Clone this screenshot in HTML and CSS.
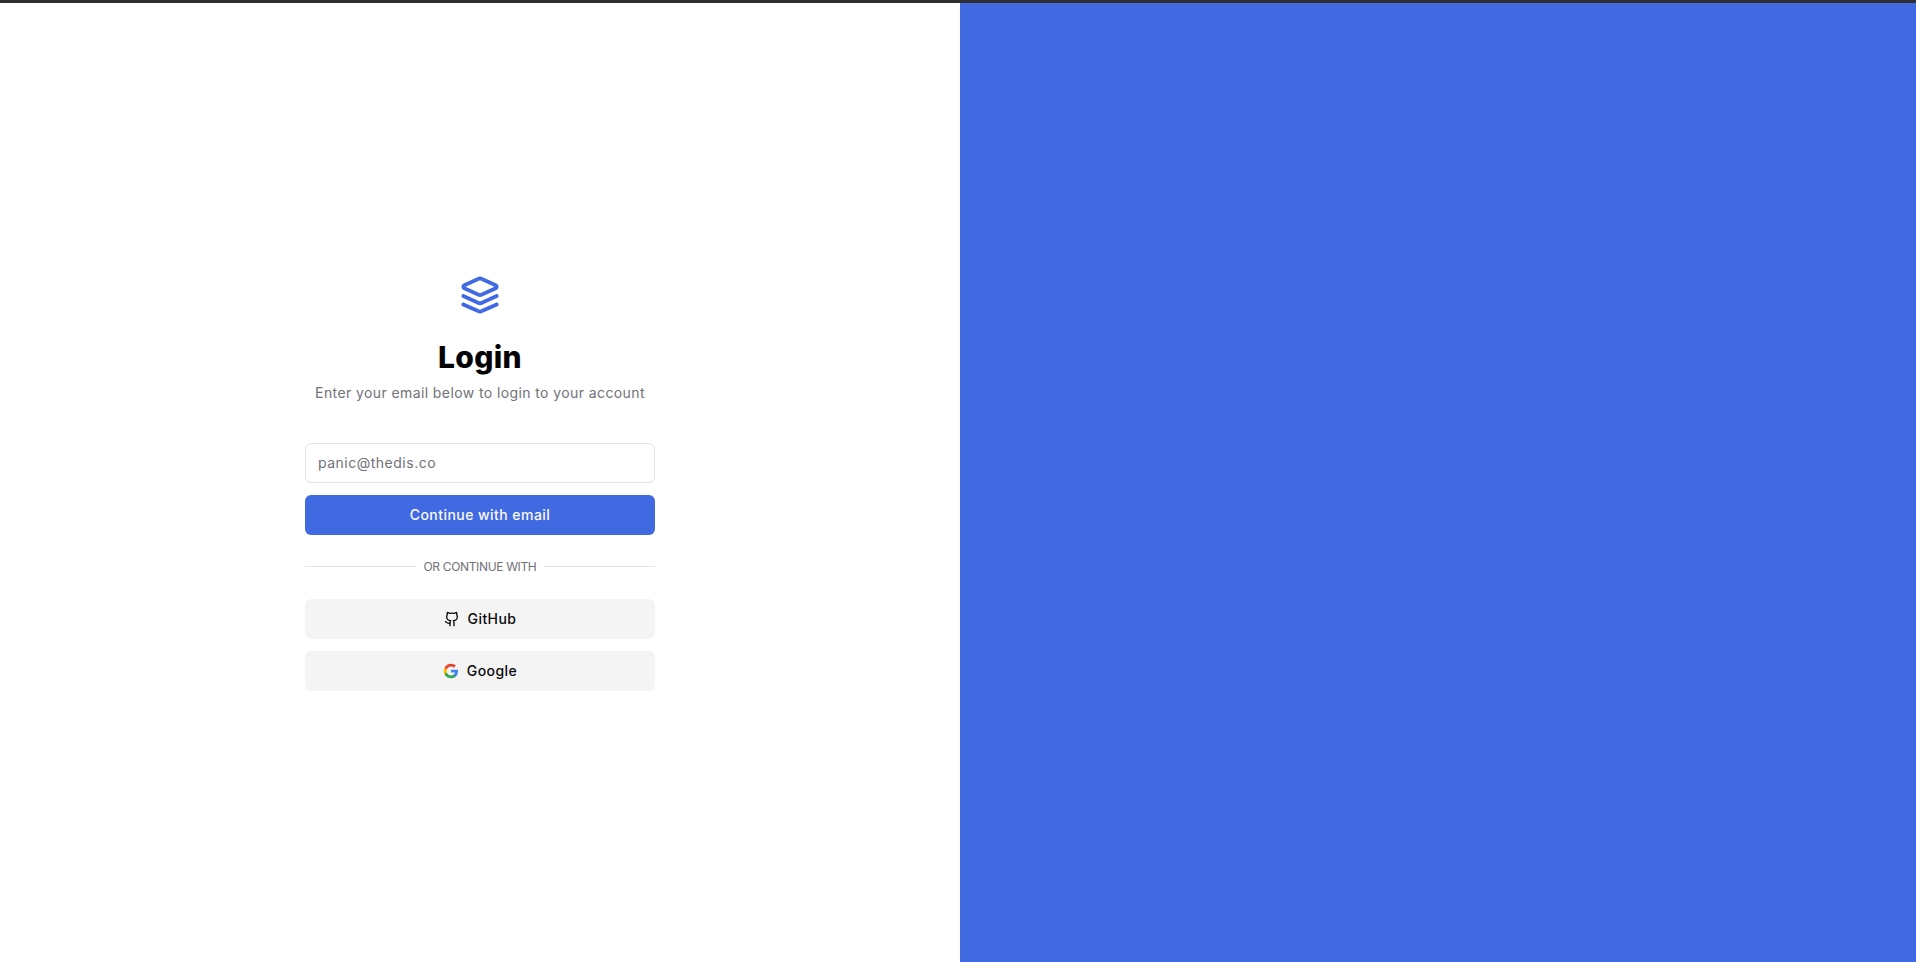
FILE: index.html
```html
<!DOCTYPE html>
<html lang="en">
<head>
<meta charset="utf-8">
<title>Login</title>
<link rel="stylesheet" href="styles.css">
</head>
<body>
<main class="page">
  <section class="left">
    <div class="card">
      <svg class="logo" viewBox="0 -0.6 24 24" fill="none" stroke="currentColor" stroke-width="2.3" stroke-linecap="round" stroke-linejoin="round">
        <path d="m12.83 2.18a2 2 0 0 0-1.66 0L2.6 6.08a1 1 0 0 0 0 1.83l8.58 3.91a2 2 0 0 0 1.66 0l8.58-3.9a1 1 0 0 0 0-1.83Z"/>
        <path d="m22 17.65-9.17 4.16a2 2 0 0 1-1.66 0L2 17.65"/>
        <path d="m22 12.65-9.17 4.16a2 2 0 0 1-1.66 0L2 12.65"/>
      </svg>
      <h1 class="title">Login</h1>
      <p class="subtitle">Enter your email below to login to your account</p>
      <form class="form">
        <input class="input" type="email" placeholder="panic@thedis.co">
        <button class="btn btn-primary" type="button">Continue with email</button>
      </form>
      <div class="divider"><span class="rule"></span><span class="divider-text">OR CONTINUE WITH</span><span class="rule"></span></div>
      <div class="socials">
        <button class="btn btn-muted" type="button">
          <svg class="icon" viewBox="0 0 24 24" fill="none" stroke="currentColor" stroke-width="2" stroke-linecap="round" stroke-linejoin="round">
            <path d="M15 22v-4a4.8 4.8 0 0 0-1-3.5c3 0 6-2 6-5.5.08-1.25-.27-2.48-1-3.5.28-1.15.28-2.35 0-3.5 0 0-1 0-3 1.5-2.64-.5-5.36-.5-8 0C6 2 5 2 5 2c-.3 1.15-.3 2.35 0 3.5A5.403 5.403 0 0 0 4 9c0 3.5 3 5.5 6 5.5-.39.49-.68 1.05-.85 1.65-.17.6-.22 1.23-.15 1.85v4"/>
            <path d="M9 18c-4.51 2-5-2-7-2"/>
          </svg>
          <span class="label">GitHub</span>
        </button>
        <button class="btn btn-muted" type="button">
          <svg class="icon" viewBox="0 0 24 24">
            <path fill="#4285F4" d="M22.56 12.25c0-.78-.07-1.53-.2-2.25H12v4.26h5.92c-.26 1.37-1.04 2.53-2.21 3.31v2.77h3.57c2.08-1.92 3.28-4.74 3.28-8.09z"/>
            <path fill="#34A853" d="M12 23c2.97 0 5.46-.98 7.28-2.66l-3.57-2.77c-.98.66-2.23 1.06-3.71 1.06-2.86 0-5.29-1.93-6.16-4.53H2.18v2.84C3.99 20.53 7.7 23 12 23z"/>
            <path fill="#FBBC05" d="M5.84 14.09c-.22-.66-.35-1.36-.35-2.09s.13-1.43.35-2.09V7.07H2.18C1.43 8.55 1 10.22 1 12s.43 3.45 1.18 4.93l2.85-2.22.81-.62z"/>
            <path fill="#EA4335" d="M12 5.38c1.62 0 3.06.56 4.21 1.64l3.15-3.15C17.45 2.09 14.97 1 12 1 7.7 1 3.99 3.47 2.18 7.07l3.66 2.84c.87-2.6 3.3-4.53 6.16-4.53z"/>
          </svg>
          <span class="label">Google</span>
        </button>
      </div>
    </div>
  </section>
  <section class="right"></section>
</main>
</body>
</html>
```
FILE: styles.css
```css
* { box-sizing: border-box; }
html, body { margin: 0; height: 100%; }
body {
  font-family: "Inter", "Noto Sans", sans-serif;
  color: #09090b;
  background: #fff;
  overflow: hidden;
}
.page {
  display: grid;
  grid-template-columns: 960px 956px;
  height: 962px;
  border-top: 3px solid #2f2f33;
}
.left {
  display: flex;
  align-items: center;
  justify-content: center;
}
.right { background: #4169e1; }
.card {
  width: 350px;
  display: flex;
  flex-direction: column;
  align-items: center;
}
.logo { width: 40px; height: 40px; color: #4169e1; display: block; }
.title {
  margin: 25px 0 0;
  font-size: 30px;
  line-height: 36px;
  font-weight: 800;
  letter-spacing: .3px;
  color: #000;
}
.subtitle {
  margin: 8px 0 0;
  font-size: 14px;
  line-height: 20px;
  letter-spacing: .4px;
  color: #71717a;
}
.form {
  width: 100%;
  margin-top: 40px;
  display: flex;
  flex-direction: column;
  gap: 12px;
}
.input {
  width: 100%;
  height: 40px;
  padding: 0 12px 2px;
  border: 1px solid #e4e4e7;
  border-radius: 6px;
  font: 14px "Inter", "Noto Sans", sans-serif;
  letter-spacing: .5px;
  background: #fff;
}
.input::placeholder { color: #71717a; opacity: 1; }
.btn {
  width: 100%;
  height: 40px;
  padding: 0 0 2px;
  border: 0;
  border-radius: 6px;
  display: flex;
  align-items: center;
  justify-content: center;
  gap: 8px;
  font: 500 14px "Inter", "Noto Sans", sans-serif;
  letter-spacing: .45px;
}
.btn-primary { background: #4169e1; color: #fafafa; }
.btn-muted { background: #f4f4f4; color: #09090b; padding: 0; }
.label { padding-bottom: 2px; }
.icon { width: 16px; height: 16px; display: block; }
.divider {
  width: 100%;
  margin-top: 22px;
  display: flex;
  align-items: center;
  gap: 8px;
  height: 18px;
}
.rule { flex: 1; height: 1px; background: #e4e4e7; }
.divider-text { padding-top: 2px; font-size: 12px; line-height: 16px; letter-spacing: -.35px; color: #71717a; }
.socials {
  width: 100%;
  margin-top: 24px;
  display: flex;
  flex-direction: column;
  gap: 12px;
}
```
